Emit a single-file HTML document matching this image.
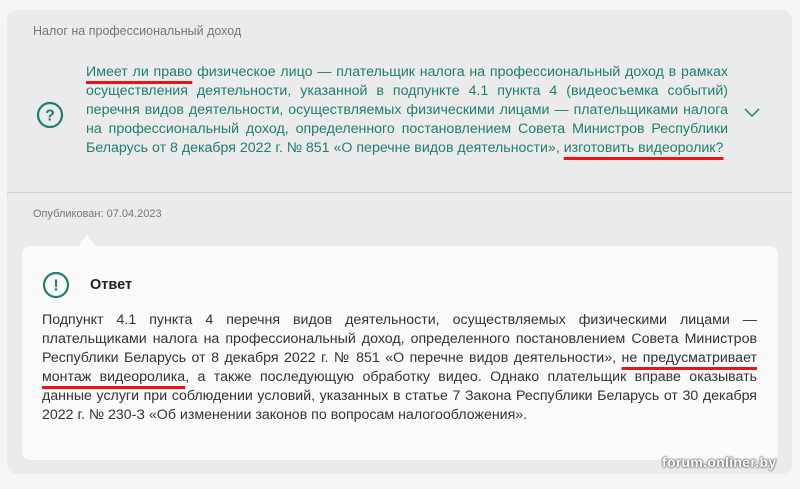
<!DOCTYPE html>
<html><head><meta charset="utf-8"><style>
body{margin:0;width:800px;height:489px;background:#f5f5f5;font-family:"Liberation Sans",Arial,sans-serif;position:relative;overflow:hidden}
.card{position:absolute;left:7px;top:10px;width:785px;height:464px;background:#ebebeb;border-radius:10px}
.cat{position:absolute;left:33px;top:24px;font-size:12.5px;color:#777}
.q{position:absolute;left:86px;top:63px;width:642px;font-size:14.2px;line-height:19px;color:#1e7f70;text-align:justify;text-align-last:left}
.u{text-decoration:underline #e8141c 3px;text-underline-offset:5px;text-decoration-skip-ink:none}
.div{position:absolute;left:7px;top:192px;width:785px;height:1px;background:#cfcfcf}
.pub{position:absolute;left:33px;top:208px;font-size:11px;color:#777}
.ans{position:absolute;left:22px;top:246px;width:756px;height:214px;background:#fafafa;border-radius:8px}
.notch{position:absolute;left:78px;top:234px;width:0;height:0;border-left:9px solid transparent;border-right:9px solid transparent;border-bottom:13px solid #fafafa}
.at{position:absolute;left:90px;top:277px;font-size:14.5px;font-weight:bold;color:#222}
.a{position:absolute;left:42px;top:311px;width:715px;font-size:14.2px;line-height:19px;color:#333;text-align:justify;text-align-last:left}
.wm{position:absolute;left:662px;top:454px;font-size:14px;font-weight:bold;color:#fff;letter-spacing:0.3px;text-shadow:0 0 2px #666,0 0 2px #666,0 0 1px #666}
</style></head><body>
<div class="card"></div>
<div class="cat">Налог на профессиональный доход</div>
<svg style="position:absolute;left:36px;top:101px" width="28" height="28" viewBox="0 0 28 28"><circle cx="14" cy="14" r="12" fill="none" stroke="#1e7f70" stroke-width="2.2"/><text x="14" y="19.5" text-anchor="middle" font-family="Liberation Sans" font-weight="bold" font-size="16" fill="#1e7f70">?</text></svg>
<div class="q"><span class="u">Имеет ли право</span> физическое лицо — плательщик налога на профессиональный доход в рамках осуществления деятельности, указанной в подпункте 4.1 пункта 4 (видеосъемка событий) перечня видов деятельности, осуществляемых физическими лицами — плательщиками налога на профессиональный доход, определенного постановлением Совета Министров Республики Беларусь от 8 декабря 2022 г. № 851 «О перечне видов деятельности», <span class="u">изготовить видеоролик?</span></div>
<svg style="position:absolute;left:744px;top:108px" width="16" height="10" viewBox="0 0 16 10"><path d="M1 1L8 8L15 1" fill="none" stroke="#1e7f70" stroke-width="1.5"/></svg>
<div class="div"></div>
<div class="pub">Опубликован: 07.04.2023</div>
<div class="ans"></div>
<div class="notch"></div>
<svg style="position:absolute;left:42px;top:271px" width="28" height="28" viewBox="0 0 28 28"><circle cx="14" cy="14" r="12" fill="none" stroke="#1e7f70" stroke-width="2.2"/><text x="14" y="19.5" text-anchor="middle" font-family="Liberation Sans" font-weight="bold" font-size="16" fill="#1e7f70">!</text></svg>
<div class="at">Ответ</div>
<div class="a">Подпункт 4.1 пункта 4 перечня видов деятельности, осуществляемых физическими лицами — плательщиками налога на профессиональный доход, определенного постановлением Совета Министров Республики Беларусь от 8 декабря 2022 г. № 851 «О перечне видов деятельности», <span class="u">не предусматривает монтаж видеоролика</span>, а также последующую обработку видео. Однако плательщик вправе оказывать данные услуги при соблюдении условий, указанных в статье 7 Закона Республики Беларусь от 30 декабря 2022 г. № 230-З «Об изменении законов по вопросам налогообложения».</div>
<div class="wm">forum.onliner.by</div>
</body></html>
